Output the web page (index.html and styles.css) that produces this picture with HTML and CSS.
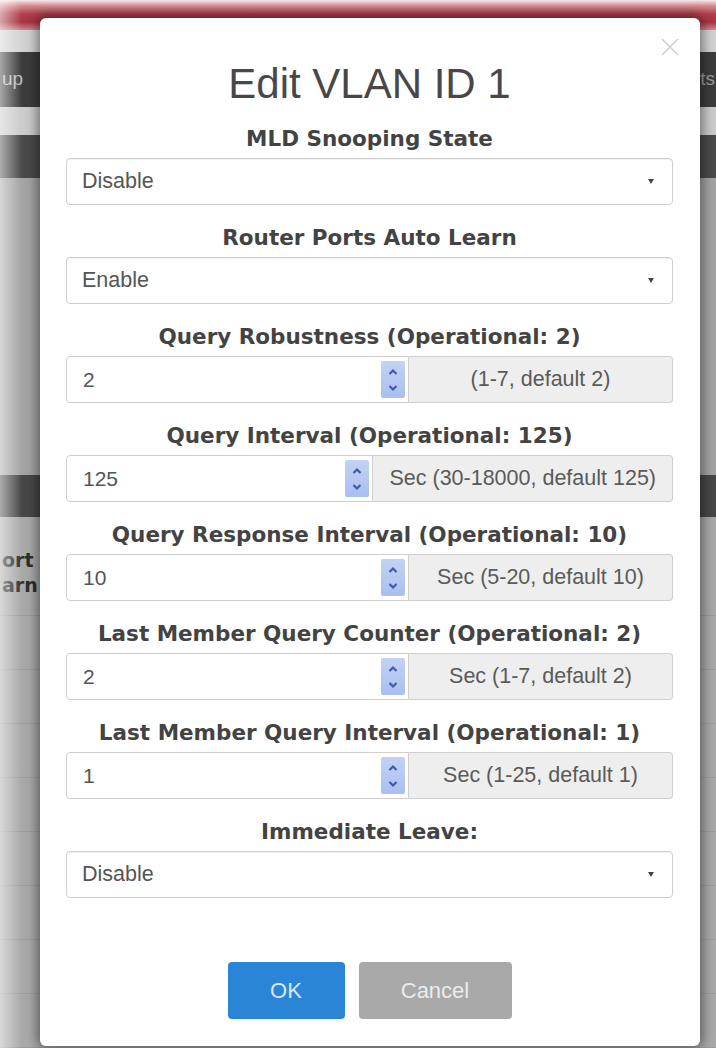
FILE: index.html
```html
<!DOCTYPE html>
<html>
<head>
<meta charset="utf-8">
<link rel="stylesheet" href="styles.css">
</head>
<body>
<div class="page">
  <div class="hdr"></div>
  <div class="band light"></div>
  <div class="band dark nav"><span>up</span><span>ts</span></div>
  <div class="band light2"></div>
  <div class="band dark2"></div>
  <div class="panel"></div>
  <div class="band dark3"></div>
  <div class="table">
    <div class="thead"><span>ort<br>arn</span></div>
    <div class="trow"></div>
    <div class="trow"></div>
    <div class="trow"></div>
    <div class="trow"></div>
    <div class="trow"></div>
    <div class="trow"></div>
    <div class="trow"></div>
    <div class="trow"></div>
  </div>
</div>

<div class="modal">
  <svg class="close" width="20" height="20" viewBox="0 0 20 20"><path d="M2 2 L18 18 M18 2 L2 18" stroke="#cfcfcf" stroke-width="1.6" fill="none"/></svg>
  <h2 class="title">Edit VLAN ID 1</h2>

  <div class="group">
    <div class="label">MLD Snooping State</div>
    <div class="select"><span>Disable</span><span class="caret"></span></div>
  </div>

  <div class="group">
    <div class="label">Router Ports Auto Learn</div>
    <div class="select"><span>Enable</span><span class="caret"></span></div>
  </div>

  <div class="group">
    <div class="label">Query Robustness (Operational: 2)</div>
    <div class="numrow">
      <div class="num"><span>2</span>
        <span class="spin"><svg width="24" height="36" viewBox="0 0 24 36"><path d="M8.5 12 L12 8.5 L15.5 12 M8.5 24 L12 27.5 L15.5 24" stroke="#3c5da6" stroke-width="2.2" fill="none"/></svg></span>
      </div>
      <div class="addon">(1-7, default 2)</div>
    </div>
  </div>

  <div class="group">
    <div class="label">Query Interval (Operational: 125)</div>
    <div class="numrow">
      <div class="num"><span>125</span>
        <span class="spin"><svg width="24" height="36" viewBox="0 0 24 36"><path d="M8.5 12 L12 8.5 L15.5 12 M8.5 24 L12 27.5 L15.5 24" stroke="#3c5da6" stroke-width="2.2" fill="none"/></svg></span>
      </div>
      <div class="addon">Sec (30-18000, default 125)</div>
    </div>
  </div>

  <div class="group">
    <div class="label">Query Response Interval (Operational: 10)</div>
    <div class="numrow">
      <div class="num"><span>10</span>
        <span class="spin"><svg width="24" height="36" viewBox="0 0 24 36"><path d="M8.5 12 L12 8.5 L15.5 12 M8.5 24 L12 27.5 L15.5 24" stroke="#3c5da6" stroke-width="2.2" fill="none"/></svg></span>
      </div>
      <div class="addon">Sec (5-20, default 10)</div>
    </div>
  </div>

  <div class="group">
    <div class="label">Last Member Query Counter (Operational: 2)</div>
    <div class="numrow">
      <div class="num"><span>2</span>
        <span class="spin"><svg width="24" height="36" viewBox="0 0 24 36"><path d="M8.5 12 L12 8.5 L15.5 12 M8.5 24 L12 27.5 L15.5 24" stroke="#3c5da6" stroke-width="2.2" fill="none"/></svg></span>
      </div>
      <div class="addon">Sec (1-7, default 2)</div>
    </div>
  </div>

  <div class="group">
    <div class="label">Last Member Query Interval (Operational: 1)</div>
    <div class="numrow">
      <div class="num"><span>1</span>
        <span class="spin"><svg width="24" height="36" viewBox="0 0 24 36"><path d="M8.5 12 L12 8.5 L15.5 12 M8.5 24 L12 27.5 L15.5 24" stroke="#3c5da6" stroke-width="2.2" fill="none"/></svg></span>
      </div>
      <div class="addon">Sec (1-25, default 1)</div>
    </div>
  </div>

  <div class="group">
    <div class="label">Immediate Leave:</div>
    <div class="select"><span>Disable</span><span class="caret"></span></div>
  </div>

  <div class="buttons">
    <div class="btn ok">OK</div>
    <div class="btn cancel">Cancel</div>
  </div>
</div>
</body>
</html>
```

FILE: styles.css
```css
html, body {
  margin: 0;
  padding: 0;
}
body {
  width: 716px;
  height: 1048px;
  overflow: hidden;
  position: relative;
  background: #a8a8a8;
  font-family: "Liberation Sans", Arial, sans-serif;
}

/* ---------- dimmed page behind the dialog ---------- */
.page {
  display: flex;
  flex-direction: column;
  height: 1048px;
  background: #a6a6a6;
  position: relative;
}
.page::after {
  content: "";
  position: absolute;
  left: 0;
  top: 0;
  bottom: 0;
  width: 22px;
  background: linear-gradient(to right, rgba(255,255,255,0.55), rgba(255,255,255,0));
}
.hdr {
  height: 30px;
  background: linear-gradient(#f7e9e9 0px, #d48a90 6px, #b0404b 14px, #a9333f 22px, #c98a8f 30px);
}
.band { flex: none; }
.light { height: 22px; background: #d2d2d2; }
.nav {
  height: 55px;
  background: #3c3c3c;
  display: flex;
  justify-content: space-between;
  align-items: center;
  color: #bdbdbd;
  font-size: 19px;
}
.nav span:first-child { margin-left: 2px; }
.nav span:last-child { margin-right: 1px; color: #9a9a9a; }
.light2 { height: 28px; background: #cbcbcb; }
.dark2 { height: 43px; background: #4a4a4a; }
.panel { height: 300px; background: #a4a4a4; }
.dark3 { height: 42px; background: #474747; }
.table {
  flex: 1;
  background: #a9a9a9;
}
.thead {
  height: 98px;
  border-bottom: 1px solid #9c9c9c;
  display: flex;
  align-items: center;
  font-weight: bold;
  font-family: "DejaVu Sans", sans-serif;
  font-size: 19px;
  line-height: 25px;
  color: #2e2e2e;
}
.thead span { margin-left: 2px; margin-top: 13px; }
.trow {
  height: 53px;
  border-bottom: 1px solid #9e9e9e;
}

/* ---------- modal ---------- */
.modal {
  position: absolute;
  left: 40px;
  top: 18px;
  width: 660px;
  height: 1028px;
  box-sizing: border-box;
  background: #fff;
  border-radius: 6px;
  box-shadow: 0 0 12px 3px rgba(0,0,0,0.45);
  padding: 44px 27px 0 26px;
  display: flex;
  flex-direction: column;
}
.close {
  position: absolute;
  left: 620px;
  top: 19px;
}
.title {
  margin: 0 0 21px;
  font-weight: normal;
  font-size: 42px;
  line-height: 44px;
  text-align: center;
  color: #484848;
}
.group {
  margin-bottom: 21px;
}
.label {
  font-family: "DejaVu Sans", sans-serif;
  font-weight: bold;
  font-size: 21.5px;
  line-height: 24px;
  text-align: center;
  color: #434343;
  margin-bottom: 7px;
}
.select {
  height: 47px;
  box-sizing: border-box;
  border: 1px solid #cfcfcf;
  border-radius: 4px;
  box-shadow: inset 0 1px 1px rgba(0,0,0,0.06);
  display: flex;
  align-items: center;
  justify-content: space-between;
  padding: 0 18px 0 15px;
  font-size: 21.5px;
  color: #555;
}
.caret {
  width: 0;
  height: 0;
  border-left: 3.5px solid transparent;
  border-right: 3.5px solid transparent;
  border-top: 5px solid #444;
}
.numrow {
  display: flex;
  height: 47px;
}
.num {
  flex: 1;
  box-sizing: border-box;
  border: 1px solid #cfcfcf;
  border-radius: 4px 0 0 4px;
  display: flex;
  align-items: center;
  justify-content: space-between;
  padding: 0 3px 0 16px;
  font-size: 21px;
  color: #555;
}
.spin {
  width: 24px;
  height: 37px;
  background: linear-gradient(#c3d2f4, #aabff0);
  border-radius: 2px;
  display: flex;
  align-items: center;
  justify-content: center;
}
.spin svg { display: block; }
.addon {
  flex: none;
  min-width: 264px;
  box-sizing: border-box;
  padding: 0 16px;
  background: #eeeeee;
  border: 1px solid #cfcfcf;
  border-left: 0;
  border-radius: 0 4px 4px 0;
  display: flex;
  align-items: center;
  justify-content: center;
  font-size: 21.5px;
  color: #5a5a5a;
  white-space: nowrap;
}
.buttons {
  margin-top: 43px;
  display: flex;
  justify-content: center;
  gap: 14px;
}
.btn {
  height: 57px;
  border-radius: 4px;
  display: flex;
  align-items: center;
  justify-content: center;
  font-size: 22px;
}
.ok {
  width: 117px;
  background: #2b85d6;
  color: #dbe8f6;
}
.cancel {
  width: 153px;
  background: #a9a9a9;
  color: #ececec;
}
```
